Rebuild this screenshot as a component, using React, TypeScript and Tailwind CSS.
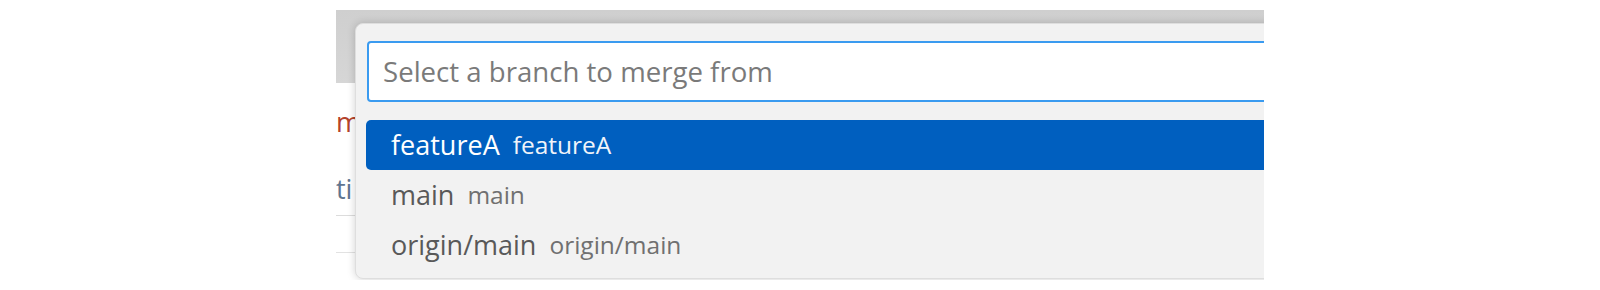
import React from "react";

const font = { fontFamily: '"Open Sans", "Noto Sans", sans-serif' };

const rows = [
  { name: "featureA", desc: "featureA", selected: true },
  { name: "main", desc: "main", selected: false },
  { name: "origin/main", desc: "origin/main", selected: false },
];

export default function App() {
  return (
    <div className="w-[1600px] h-[290px] bg-white overflow-hidden" style={font}>
      <div className="ml-[336px] mt-[10px] w-[928px] h-[270px] overflow-hidden relative bg-white">
        {/* background app */}
        <div className="flex flex-col">
          <div className="h-[73px] bg-gradient-to-b from-[#cfcfcf] to-[#d6d6d6]" />
          <div className="h-[21px]" />
          <div className="w-[19px] overflow-hidden h-[36px] leading-[36px] text-[27px] text-[#b4432c] whitespace-nowrap">m</div>
          <div className="h-[31px]" />
          <div className="w-[19px] overflow-hidden h-[36px] leading-[36px] text-[27px] text-[#5f7590] whitespace-nowrap">ti</div>
          <div className="h-[8px]" />
          <div className="w-[19px] h-px bg-[#dcdcdc]" />
          <div className="h-[36px]" />
          <div className="w-[19px] h-px bg-[#e2e2e2]" />
        </div>

        {/* quick pick panel */}
        <div className="absolute left-[19px] top-[13px] w-[1000px] h-[256px] rounded-[8px] bg-[#f2f2f2] border border-[#dedede] shadow-[0_0_8px_rgba(0,0,0,0.18)] pt-[17px] pl-[10px]">
          <div className="ml-[1px] h-[61px] rounded-[4px] border-2 border-[#3a9bf0] bg-white flex items-center pl-[14px]">
            <span className="text-[27.6px] text-[#7a7a7a] leading-none">Select a branch to merge from</span>
          </div>
          <div className="mt-[18px] flex flex-col">
            {rows.map((r) => (
              <div
                key={r.name}
                className={
                  r.selected
                    ? "h-[50px] rounded-[5px] bg-[#005fbf] flex items-center pl-[25px] gap-[13px] whitespace-nowrap"
                    : "h-[50px] flex items-center pl-[25px] gap-[13px] whitespace-nowrap"
                }
              >
                <span className={r.selected ? "text-[27px] text-white" : "text-[27px] text-[#595959]"}>{r.name}</span>
                <span className={r.selected ? "text-[24.5px] text-[#f0f4fa] font-medium" : "text-[24.5px] text-[#707070]"}>
                  {r.desc}
                </span>
              </div>
            ))}
          </div>
        </div>
      </div>
    </div>
  );
}
